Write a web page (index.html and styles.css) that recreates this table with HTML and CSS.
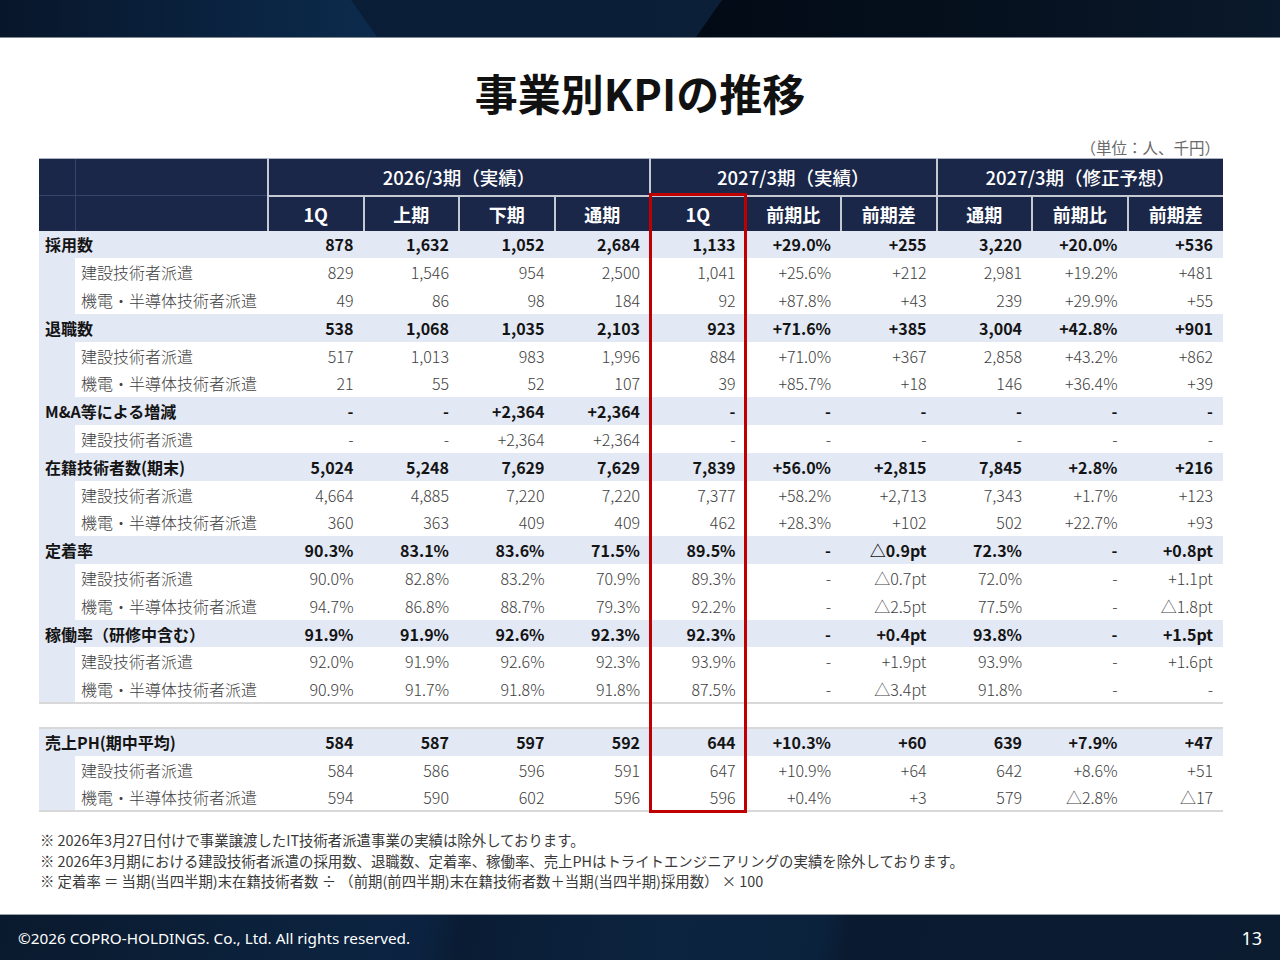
FILE: index.html
```html
<!DOCTYPE html>
<html lang="ja">
<head>
<meta charset="utf-8">
<title>事業別KPIの推移</title>
<link rel="stylesheet" href="styles.css">
</head>
<body>
<div class="slide">
  <header class="topbar"></header>
  <main class="content">
    <h1 class="title">事業別KPIの推移</h1>
    <div class="unit">（単位：人、千円）</div>
    <div class="table-wrap">
      <table class="kpi">
        <colgroup>
          <col class="c-indent"><col class="c-label">
          <col class="c-num"><col class="c-num"><col class="c-num"><col class="c-num">
          <col class="c-num"><col class="c-num"><col class="c-num">
          <col class="c-num"><col class="c-num"><col class="c-num">
        </colgroup>
        <thead>
          <tr class="hr1">
            <th class="hl hl-a"></th><th class="hl"></th>
            <th colspan="4">2026/3期（実績）</th>
            <th colspan="3">2027/3期（実績）</th>
            <th colspan="3">2027/3期（修正予想）</th>
          </tr>
          <tr class="hr2">
            <th class="hl hl-a"></th><th class="hl"></th>
            <th>1Q</th><th>上期</th><th>下期</th><th>通期</th>
            <th>1Q</th><th>前期比</th><th>前期差</th>
            <th>通期</th><th>前期比</th><th>前期差</th>
          </tr>
        </thead>
        <tbody>
          <tr class="cat"><td colspan="2" class="lbl">採用数</td><td>878</td><td>1,632</td><td>1,052</td><td>2,684</td><td>1,133</td><td>+29.0%</td><td>+255</td><td>3,220</td><td>+20.0%</td><td>+536</td></tr>
          <tr class="sub"><td class="ind"></td><td class="lbl">建設技術者派遣</td><td>829</td><td>1,546</td><td>954</td><td>2,500</td><td>1,041</td><td>+25.6%</td><td>+212</td><td>2,981</td><td>+19.2%</td><td>+481</td></tr>
          <tr class="sub"><td class="ind"></td><td class="lbl">機電・半導体技術者派遣</td><td>49</td><td>86</td><td>98</td><td>184</td><td>92</td><td>+87.8%</td><td>+43</td><td>239</td><td>+29.9%</td><td>+55</td></tr>

          <tr class="cat"><td colspan="2" class="lbl">退職数</td><td>538</td><td>1,068</td><td>1,035</td><td>2,103</td><td>923</td><td>+71.6%</td><td>+385</td><td>3,004</td><td>+42.8%</td><td>+901</td></tr>
          <tr class="sub"><td class="ind"></td><td class="lbl">建設技術者派遣</td><td>517</td><td>1,013</td><td>983</td><td>1,996</td><td>884</td><td>+71.0%</td><td>+367</td><td>2,858</td><td>+43.2%</td><td>+862</td></tr>
          <tr class="sub"><td class="ind"></td><td class="lbl">機電・半導体技術者派遣</td><td>21</td><td>55</td><td>52</td><td>107</td><td>39</td><td>+85.7%</td><td>+18</td><td>146</td><td>+36.4%</td><td>+39</td></tr>

          <tr class="cat"><td colspan="2" class="lbl">M&amp;A等による増減</td><td>-</td><td>-</td><td>+2,364</td><td>+2,364</td><td>-</td><td>-</td><td>-</td><td>-</td><td>-</td><td>-</td></tr>
          <tr class="sub"><td class="ind"></td><td class="lbl">建設技術者派遣</td><td>-</td><td>-</td><td>+2,364</td><td>+2,364</td><td>-</td><td>-</td><td>-</td><td>-</td><td>-</td><td>-</td></tr>

          <tr class="cat"><td colspan="2" class="lbl">在籍技術者数(期末)</td><td>5,024</td><td>5,248</td><td>7,629</td><td>7,629</td><td>7,839</td><td>+56.0%</td><td>+2,815</td><td>7,845</td><td>+2.8%</td><td>+216</td></tr>
          <tr class="sub"><td class="ind"></td><td class="lbl">建設技術者派遣</td><td>4,664</td><td>4,885</td><td>7,220</td><td>7,220</td><td>7,377</td><td>+58.2%</td><td>+2,713</td><td>7,343</td><td>+1.7%</td><td>+123</td></tr>
          <tr class="sub"><td class="ind"></td><td class="lbl">機電・半導体技術者派遣</td><td>360</td><td>363</td><td>409</td><td>409</td><td>462</td><td>+28.3%</td><td>+102</td><td>502</td><td>+22.7%</td><td>+93</td></tr>

          <tr class="cat"><td colspan="2" class="lbl">定着率</td><td>90.3%</td><td>83.1%</td><td>83.6%</td><td>71.5%</td><td>89.5%</td><td>-</td><td>△0.9pt</td><td>72.3%</td><td>-</td><td>+0.8pt</td></tr>
          <tr class="sub"><td class="ind"></td><td class="lbl">建設技術者派遣</td><td>90.0%</td><td>82.8%</td><td>83.2%</td><td>70.9%</td><td>89.3%</td><td>-</td><td>△0.7pt</td><td>72.0%</td><td>-</td><td>+1.1pt</td></tr>
          <tr class="sub"><td class="ind"></td><td class="lbl">機電・半導体技術者派遣</td><td>94.7%</td><td>86.8%</td><td>88.7%</td><td>79.3%</td><td>92.2%</td><td>-</td><td>△2.5pt</td><td>77.5%</td><td>-</td><td>△1.8pt</td></tr>

          <tr class="cat"><td colspan="2" class="lbl">稼働率（研修中含む）</td><td>91.9%</td><td>91.9%</td><td>92.6%</td><td>92.3%</td><td>92.3%</td><td>-</td><td>+0.4pt</td><td>93.8%</td><td>-</td><td>+1.5pt</td></tr>
          <tr class="sub"><td class="ind"></td><td class="lbl">建設技術者派遣</td><td>92.0%</td><td>91.9%</td><td>92.6%</td><td>92.3%</td><td>93.9%</td><td>-</td><td>+1.9pt</td><td>93.9%</td><td>-</td><td>+1.6pt</td></tr>
          <tr class="sub last"><td class="ind"></td><td class="lbl">機電・半導体技術者派遣</td><td>90.9%</td><td>91.7%</td><td>91.8%</td><td>91.8%</td><td>87.5%</td><td>-</td><td>△3.4pt</td><td>91.8%</td><td>-</td><td>-</td></tr>

          <tr class="gap"><td colspan="12"></td></tr>

          <tr class="cat first"><td colspan="2" class="lbl">売上PH(期中平均)</td><td>584</td><td>587</td><td>597</td><td>592</td><td>644</td><td>+10.3%</td><td>+60</td><td>639</td><td>+7.9%</td><td>+47</td></tr>
          <tr class="sub"><td class="ind"></td><td class="lbl">建設技術者派遣</td><td>584</td><td>586</td><td>596</td><td>591</td><td>647</td><td>+10.9%</td><td>+64</td><td>642</td><td>+8.6%</td><td>+51</td></tr>
          <tr class="sub last"><td class="ind"></td><td class="lbl">機電・半導体技術者派遣</td><td>594</td><td>590</td><td>602</td><td>596</td><td>596</td><td>+0.4%</td><td>+3</td><td>579</td><td>△2.8%</td><td>△17</td></tr>
        </tbody>
      </table>
      <div class="highlight"></div>
    </div>
    <div class="notes">
      <p>※ 2026年3月27日付けで事業譲渡したIT技術者派遣事業の実績は除外しております。</p>
      <p>※ 2026年3月期における建設技術者派遣の採用数、退職数、定着率、稼働率、売上PHはトライトエンジニアリングの実績を除外しております。</p>
      <p>※ 定着率 ＝ 当期(当四半期)末在籍技術者数 ÷ （前期(前四半期)末在籍技術者数＋当期(当四半期)採用数） × 100</p>
    </div>
  </main>
  <footer class="footer">
    <span class="copy">©2026 COPRO-HOLDINGS. Co., Ltd. All rights reserved.</span>
    <span class="page">13</span>
  </footer>
</div>
</body>
</html>
```

FILE: styles.css
```css
* { box-sizing: border-box; }
html, body { margin: 0; padding: 0; background: #ffffff; }
body {
  font-family: "Noto Sans CJK JP", "Noto Sans", sans-serif;
  color: #1a1a1a;
}
.slide {
  width: 1280px;
  height: 960px;
  display: flex;
  flex-direction: column;
  overflow: hidden;
}

/* top bar */
.topbar {
  position: relative;
  height: 38px;
  flex: none;
  border-bottom: 1px solid #7f8791;
  background: linear-gradient(90deg, #0a1d36 0%, #0a1e37 50%, #0b1f39 56%);
  overflow: hidden;
}
.topbar::before {
  content: "";
  position: absolute;
  left: 0; top: 0; bottom: 0;
  width: 380px;
  background: linear-gradient(90deg, #08162a 0%, #0a2340 60%, #0c2b4c 100%);
  clip-path: polygon(0 0, 351px 0, 377px 100%, 0 100%);
}
.topbar::after {
  content: "";
  position: absolute;
  right: 0; top: 0; bottom: 0;
  width: 584px;
  background: linear-gradient(90deg, #020b15 0%, #050f1c 40%, #0a192b 100%);
  clip-path: polygon(26px 0, 100% 0, 100% 100%, 0 100%);
}

/* content */
.content {
  flex: 1;
  display: flex;
  flex-direction: column;
}
.title {
  margin: 26px 0 0;
  height: 56px;
  line-height: 56px;
  text-align: center;
  font-size: 43px;
  font-weight: 700;
  color: #111111;
  letter-spacing: 0;
}
.unit {
  margin-top: 17px;
  height: 20px;
  line-height: 20px;
  font-size: 15.5px;
  color: #6a6a6a;
  text-align: right;
  padding-right: 60px;
}

.table-wrap {
  position: relative;
  width: 1184px;
  margin: 1px 0 0 39px;
}
.kpi {
  width: 1184px;
  table-layout: fixed;
  border-collapse: collapse;
  border-spacing: 0;
}
.c-indent { width: 36px; }
.c-label { width: 193px; }
.c-num { width: 95.5px; }

.kpi th {
  background: #1b2749;
  color: #ffffff;
  padding: 0;
  text-align: center;
  border-left: 2px solid #c4c9d4;
  white-space: nowrap;
}
.kpi .hr1 th {
  height: 37px;
  font-size: 18.5px;
  font-weight: 500;
  border-top: 1px solid #aab1c0;
  border-bottom: 2px solid #c4c9d4;
}
.kpi .hr2 th {
  height: 35px;
  font-size: 18px;
  font-weight: 700;
}
.kpi th.hl {
  border-left: 1px solid #36436a;
}
.kpi th.hl-a { border-left: none; }
.kpi .hr1 th.hl { border-bottom: 1px solid #36436a; }

.kpi td {
  height: 27.8px;
  padding: 0 10px 0 0;
  text-align: right;
  font-size: 16px;
  line-height: 20px;
  white-space: nowrap;
}
.kpi td.lbl { text-align: left; padding: 0 0 0 6px; }

.kpi tr.cat td {
  background: #e3e8f5;
  font-weight: 700;
  color: #141414;
}
.kpi tr.sub td {
  background: #ffffff;
  font-weight: 300;
  color: #404040;
}
.kpi tr.sub td.ind { background: #e3e8f5; }
.kpi tr.last td { border-bottom: 2px solid #d8d8d8; }
.kpi tr.gap td {
  height: 25px;
  background: #ffffff;
  padding: 0;
}
.kpi tr.first td { border-top: 2px solid #d8d8d8; }

.highlight {
  position: absolute;
  left: 610px;
  top: 35px;
  width: 98px;
  height: 620px;
  border: 3px solid #c00000;
  pointer-events: none;
}

.notes {
  margin-top: 18px;
  padding-left: 40px;
  font-size: 14.4px;
  line-height: 20.5px;
  color: #3a3a3a;
}
.notes p { margin: 0; }

/* footer */
.footer {
  flex: none;
  height: 46px;
  border-top: 1px solid #9aa0a8;
  background: linear-gradient(100deg, #0a1a2e 0%, #0c2441 30%, #0b2340 33%, #0a1c34 36%, #0c2440 52%, #0b223d 64%, #0a1b31 66%, #0b1c31 100%);
  display: flex;
  align-items: center;
  justify-content: space-between;
  padding: 0 18px 0 18px;
  color: #ffffff;
}
.copy {
  font-family: "Noto Sans", "Noto Sans CJK JP", sans-serif;
  font-size: 15.3px;
}
.page {
  font-family: "Noto Sans", sans-serif;
  font-size: 18px;
}
```
